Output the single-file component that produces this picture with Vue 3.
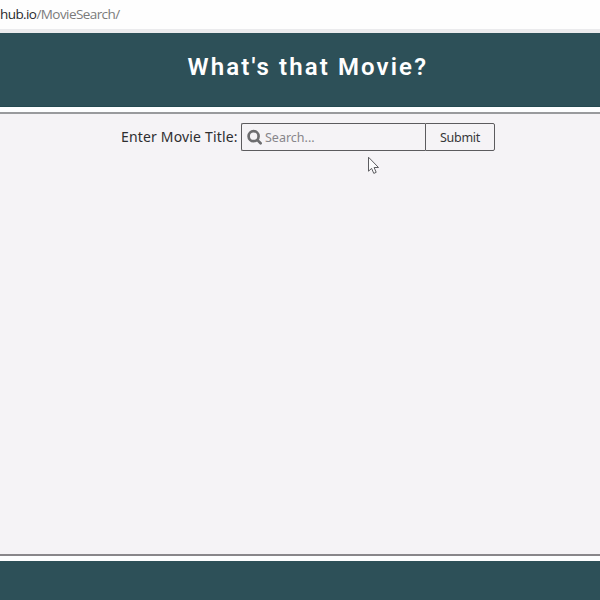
<script setup>
import { ref } from 'vue'

const title = ref('')
</script>

<template>
  <div class="window">
    <div class="address"><span class="host">hub.io</span><span class="path">/MovieSearch/</span></div>
    <header class="banner"><h1>What's that Movie?</h1></header>
    <main class="content">
      <form class="search" @submit.prevent>
        <label for="title">Enter Movie Title:</label>
        <div class="field">
          <svg class="glass" viewBox="0 0 16 16" aria-hidden="true">
            <circle cx="6.6" cy="7.2" r="5" />
            <path d="M10.5 11.1L13.6 14.2" />
          </svg>
          <input id="title" v-model="title" type="text" placeholder="Search..." />
        </div>
        <button type="submit">Submit</button>
      </form>
    </main>
    <footer class="footer"></footer>
    <svg class="cursor" viewBox="0 0 13 20" aria-hidden="true">
      <path d="M1.5 1.2V15.2L4.6 12.4L6.8 17.4L9.2 16.3L7.1 11.5H11.5Z" />
    </svg>
  </div>
</template>

<style>
body {
  margin: 0;
  overflow: hidden;
}
</style>

<style scoped>
.window {
  position: relative;
  display: flex;
  flex-direction: column;
  width: 600px;
  height: 600px;
  overflow: hidden;
  background: #fdfeff;
  font-family: "Noto Sans", sans-serif;
}
.address {
  box-sizing: border-box;
  height: 33px;
  border-bottom: 4px solid #ebebed;
  background: #fefefe;
  font-family: "Open Sans", sans-serif;
  font-size: 13.5px;
  letter-spacing: -0.58px;
  line-height: 29px;
  white-space: nowrap;
}
.host {
  color: #29292c;
}
.path {
  color: #7b7b7b;
}
.banner {
  box-sizing: border-box;
  height: 74px;
  padding-left: 187.5px;
  border-bottom: 1px solid #244950;
  background: #2d5058;
}
h1 {
  margin: 0;
  color: #fff;
  font-family: Roboto, sans-serif;
  font-size: 24px;
  font-weight: 600;
  letter-spacing: 2.12px;
  line-height: 68px;
  white-space: nowrap;
}
.content {
  box-sizing: border-box;
  height: 444px;
  margin-top: 5px;
  border-top: 2px solid #999a9d;
  border-bottom: 2px solid #88868a;
  background: #f5f3f6;
}
.search {
  display: flex;
  padding: 9px 0 0 121px;
}
label {
  width: 120px;
  color: #2e2e30;
  font-size: 14px;
  letter-spacing: 0.17px;
  line-height: 27px;
  white-space: nowrap;
}
.field {
  box-sizing: border-box;
  display: flex;
  align-items: center;
  width: 184px;
  height: 28px;
  padding-left: 5px;
  border: 1px solid #5c5b5e;
  border-right: 0;
  border-radius: 2px 0 0 2px;
}
.glass {
  flex: none;
  width: 16px;
  height: 16px;
  fill: none;
  stroke: #6d6d6f;
  stroke-width: 2.7;
  stroke-linecap: round;
}
input {
  width: 145px;
  margin-left: 2px;
  padding: 0;
  border: 0;
  outline: 0;
  background: transparent;
  color: #303033;
  font: 12.5px "Noto Sans", sans-serif;
}
input::placeholder {
  color: #87858a;
  opacity: 1;
}
button {
  box-sizing: border-box;
  width: 70px;
  height: 28px;
  padding: 0;
  border: 1px solid #5c5b5e;
  border-radius: 0 2px 2px 0;
  background: transparent;
  color: #363639;
  font: 12.5px "Noto Sans", sans-serif;
  letter-spacing: -0.25px;
}
.footer {
  flex: 1;
  margin-top: 5px;
  background: #2d5058;
}
.cursor {
  position: absolute;
  left: 367px;
  top: 156px;
  width: 13px;
  height: 20px;
  fill: #fbfbfc;
  stroke: #5d5d61;
  stroke-width: 1;
}
</style>
